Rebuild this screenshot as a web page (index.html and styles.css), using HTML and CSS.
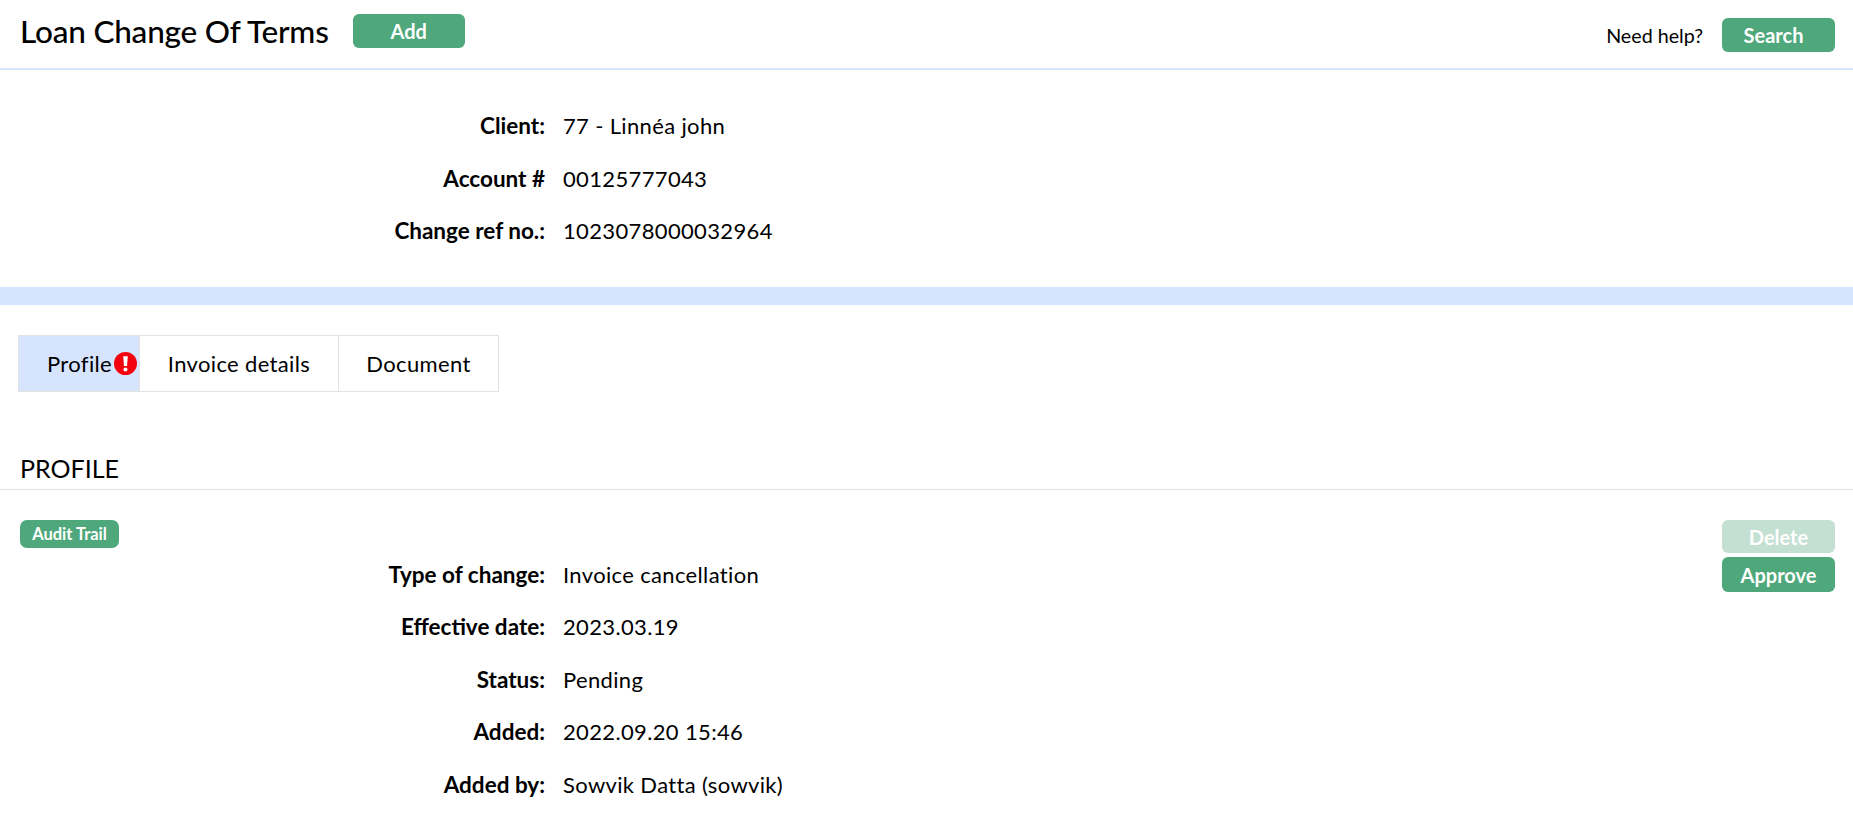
FILE: index.html
```html
<!DOCTYPE html>
<html lang="en">
<head>
    <meta charset="UTF-8">
    <meta name="viewport" content="width=device-width, initial-scale=1.0">
    <title>Loan Change Of Terms</title>
    <link rel="stylesheet" href="styles.css">
</head>
<body>
    <header class="top-bar">
        <h1 class="page-title">Loan Change Of Terms</h1>
        <button class="btn btn-add">Add</button>
        <div class="top-right">
            <a class="help-link">Need help?</a>
            <button class="btn btn-side btn-search">Search</button>
        </div>
    </header>

    <section class="summary">
        <dl class="info-list">
            <div class="info-row"><dt>Client:</dt><dd>77 - Linnéa john</dd></div>
            <div class="info-row"><dt>Account #</dt><dd>00125777043</dd></div>
            <div class="info-row"><dt>Change ref no.:</dt><dd>1023078000032964</dd></div>
        </dl>
    </section>

    <div class="band"></div>

    <nav class="tabs">
        <a class="tab tab-active">Profile<svg class="alert-icon" viewBox="0 0 24 24" aria-hidden="true"><circle cx="12" cy="12" r="12" fill="#f5000f"/><path d="M9.6 4.5h4.8l-.8 10h-3.2z" fill="#fff"/><circle cx="12" cy="18.2" r="2.1" fill="#fff"/></svg></a>
        <a class="tab tab-invoice">Invoice details</a>
        <a class="tab tab-doc">Document</a>
    </nav>

    <h2 class="section-title">PROFILE</h2>

    <section class="profile">
        <div class="profile-actions">
            <button class="btn btn-side btn-disabled">Delete</button>
            <button class="btn btn-side btn-approve">Approve</button>
        </div>
        <button class="btn btn-audit">Audit Trail</button>
        <dl class="info-list info-list-profile">
            <div class="info-row"><dt>Type of change:</dt><dd>Invoice cancellation</dd></div>
            <div class="info-row"><dt>Effective date:</dt><dd>2023.03.19</dd></div>
            <div class="info-row"><dt>Status:</dt><dd>Pending</dd></div>
            <div class="info-row"><dt>Added:</dt><dd>2022.09.20 15:46</dd></div>
            <div class="info-row"><dt>Added by:</dt><dd>Sowvik Datta (sowvik)</dd></div>
        </dl>
    </section>
</body>
</html>
```

FILE: styles.css
```css
body {
    margin: 0;
    padding: 0;
    background-color: #fff;
    color: #000;
    font-family: "Lato", "Roboto", sans-serif;
    font-size: 22px;
    letter-spacing: 0.35px;
    overflow: hidden;
}

.top-bar {
    display: flex;
    align-items: center;
    height: 68px;
    padding: 0 18px 0 20px;
    border-bottom: 2px solid #d6e4fd;
}
.page-title {
    margin: 0 24px 6px 0;
    font-size: 31.5px;
    font-weight: 500;
    letter-spacing: -0.2px;
}
.top-right {
    display: flex;
    align-items: center;
    gap: 19px;
    margin-left: auto;
    margin-top: 2px;
}
.help-link {
    font-size: 19.7px;
    letter-spacing: 0;
}

.btn {
    border: none;
    border-radius: 6px;
    background-color: #4ea87b;
    color: #fff;
    font-family: inherit;
    font-weight: 700;
    font-size: 20px;
    padding: 0;
}
.btn-add {
    width: 112px;
    height: 34px;
    margin-bottom: 6px;
}
.btn-side {
    width: 113px;
    height: 34px;
}
.btn-search {
    padding-right: 10px;
}
.btn-approve {
    height: 35px;
}
.btn-disabled {
    height: 33px;
    background-color: #c3e0d2;
}
.btn-audit {
    display: block;
    width: 99px;
    height: 28px;
    font-size: 16.5px;
    border-radius: 7px;
}

.summary {
    padding: 29.5px 0 30.5px;
    height: 157px;
}
.info-list {
    margin: 0;
}
.info-row {
    display: flex;
    height: 52.5px;
    align-items: center;
}
.info-row dt {
    width: 545px;
    text-align: right;
    font-size: 22.5px;
    font-weight: 700;
    letter-spacing: 0;
}
.info-row dd {
    margin: 0 0 0 18px;
}

.band {
    height: 18px;
    background-color: #d6e4fd;
}

.tabs {
    display: flex;
    width: 481px;
    height: 57px;
    margin: 30px 0 0 18px;
    border: 1px solid #e2e2e2;
    box-sizing: border-box;
}
.tab {
    display: flex;
    align-items: center;
    justify-content: center;
    box-sizing: border-box;
}
.tab-active {
    justify-content: flex-start;
    width: 120px;
    padding-left: 28px;
    background-color: #d6e4fd;
}
.tab-invoice {
    width: 200px;
    border-left: 1px solid #e2e2e2;
    border-right: 1px solid #e2e2e2;
}
.tab-doc {
    flex: 1;
}
.alert-icon {
    flex: none;
    width: 23px;
    height: 23px;
    margin-left: 2px;
}

.section-title {
    margin: 61px 0 0;
    padding: 0 0 6px 20px;
    height: 30px;
    font-size: 25px;
    font-weight: 400;
    letter-spacing: 0;
    border-bottom: 1px solid #e2e2e2;
}

.profile {
    padding: 30px 18px 0 20px;
}
.profile-actions {
    display: flex;
    flex-direction: column;
    gap: 4px;
    float: right;
}
.info-list-profile {
    margin: 0 0 0 -20px;
}
```
